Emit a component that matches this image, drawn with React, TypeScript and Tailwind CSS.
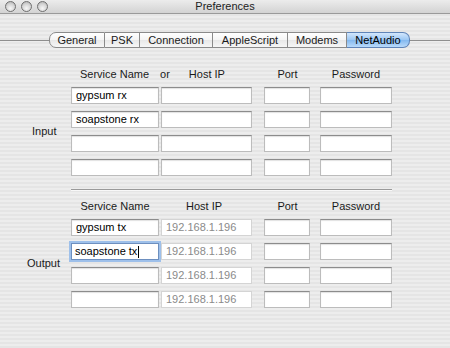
import React from "react";

const font = "font-['Liberation_Sans','DejaVu_Sans',sans-serif]";

const tabs = [
  { name: "General", w: "w-[56px]" },
  { name: "PSK", w: "w-[35px]" },
  { name: "Connection", w: "w-[73px]" },
  { name: "AppleScript", w: "w-[75px]" },
  { name: "Modems", w: "w-[59px]" },
  { name: "NetAudio", w: "w-[63px]" },
];

const inputRows = [
  { service: "gypsum rx" },
  { service: "soapstone rx" },
  { service: "" },
  { service: "" },
];

const outputRows = [
  { service: "gypsum tx", focused: false },
  { service: "soapstone tx", focused: true },
  { service: "", focused: false },
  { service: "", focused: false },
];

// plain text field with the aqua inset look
const Field = ({
  w,
  text,
  dim,
  focused,
}: {
  w: string;
  text?: string;
  dim?: boolean;
  focused?: boolean;
}) => {
  if (focused) {
    return (
      <div
        className={`${w} h-[17px] bg-white border border-[#6d8fbf] ring-[2px] ring-[#9ec0ea] flex items-center px-[3px] text-[11px] leading-none text-black`}
      >
        {text}
        <span className="w-px h-[12px] bg-black ml-px" />
      </div>
    );
  }
  return (
    <div
      className={`${w} h-[17px] bg-white border ${
        dim
          ? "border-[#d4d4d4] text-[#8a8a8a]"
          : "border-[#bcbcbc] border-t-[#8c8c8c] text-black shadow-[inset_0_1px_1px_rgba(0,0,0,0.12)]"
      } flex items-center px-[4px] text-[11px] leading-none`}
    >
      {text}
    </div>
  );
};

const TrafficLight = () => (
  <div className="w-[11px] h-[11px] rounded-full border border-[#707070] bg-[radial-gradient(circle_at_50%_70%,#f7f7f7_0%,#d4d4d4_55%,#a9a9a9_100%)]" />
);

export default function App() {
  return (
    <div
      className={`${font} w-[450px] h-[348px] overflow-hidden flex flex-col bg-[repeating-linear-gradient(to_bottom,#ededed_0px,#ededed_2px,#e5e5e5_2px,#e5e5e5_4px)] text-[#1a1a1a]`}
    >
      {/* title bar */}
      <div className="h-[14px] shrink-0 relative flex items-center bg-[linear-gradient(to_bottom,#ececec,#d3d3d3)] border-b border-[#9a9a9a]">
        <div className="flex gap-[5px] pl-[5px]">
          <TrafficLight />
          <TrafficLight />
          <TrafficLight />
        </div>
        <div className="absolute inset-0 flex justify-center items-center text-[11px] leading-none text-[#222]">
          Preferences
        </div>
      </div>

      {/* tab bar */}
      <div className="mt-[18px] h-[16px] flex items-center">
        <div className="w-[49px] h-px bg-[#8e8e8e]" />
        <div className="flex h-[16px]">
          {tabs.map((t, i) => {
            const selected = t.name === "NetAudio";
            const first = i === 0;
            const last = i === tabs.length - 1;
            return (
              <div
                key={t.name}
                className={`${t.w} h-[16px] flex items-center justify-center text-[11px] leading-none border-y ${
                  first ? "border-l rounded-l-[7px]" : ""
                } ${last ? "border-r rounded-r-[7px]" : "border-r"} ${
                  selected
                    ? "bg-[linear-gradient(to_bottom,#d3e7fd,#9ac6f3_50%,#83b8ef_51%,#b9dafb)] border-[#5f84b8] text-black"
                    : "bg-[linear-gradient(to_bottom,#ffffff,#f4f4f4_50%,#e8e8e8_51%,#f6f6f6)] border-[#8a8a8a]"
                }`}
              >
                {t.name}
              </div>
            );
          })}
        </div>
        <div className="flex-1 h-px bg-[#8e8e8e]" />
      </div>

      {/* input section */}
      <div className="mt-[19px] flex">
        <div className="w-[71px] flex items-center pl-[32px] pt-[20px] text-[11px]">Input</div>
        <div className="flex flex-col">
          <div className="flex h-[14px] items-center text-[11px]">
            <div className="w-[181px] flex">
              <span className="ml-[9px]">Service Name</span>
              <span className="ml-[11px]">or</span>
              <span className="ml-[19px]">Host IP</span>
            </div>
            <div className="ml-[12px] w-[46px] flex justify-center pl-[1px]">Port</div>
            <div className="ml-[10px] w-[72px] flex justify-center">Password</div>
          </div>
          <div className="mt-[6px] flex flex-col gap-[7px]">
            {inputRows.map((r, i) => (
              <div key={i} className="flex">
                <Field w="w-[88px]" text={r.service} />
                <div className="ml-[2px]">
                  <Field w="w-[91px]" />
                </div>
                <div className="ml-[12px]">
                  <Field w="w-[46px]" />
                </div>
                <div className="ml-[10px]">
                  <Field w="w-[72px]" />
                </div>
              </div>
            ))}
          </div>
        </div>
      </div>

      {/* separator */}
      <div className="mt-[13px] ml-[71px] w-[321px] h-px bg-[#9a9a9a] shadow-[0_1px_0_#f8f8f8]" />

      {/* output section */}
      <div className="mt-[9px] flex">
        <div className="w-[71px] flex items-center pl-[27px] pt-[20px] text-[11px]">Output</div>
        <div className="flex flex-col">
          <div className="flex h-[14px] items-center text-[11px]">
            <div className="w-[88px] flex justify-center">Service Name</div>
            <div className="ml-[2px] w-[91px] flex justify-center pr-[5px]">Host IP</div>
            <div className="ml-[12px] w-[46px] flex justify-center pl-[1px]">Port</div>
            <div className="ml-[10px] w-[72px] flex justify-center">Password</div>
          </div>
          <div className="mt-[6px] flex flex-col gap-[7px]">
            {outputRows.map((r, i) => (
              <div key={i} className="flex">
                <Field w="w-[88px]" text={r.service} focused={r.focused} />
                <div className="ml-[2px]">
                  <Field w="w-[91px]" text="192.168.1.196" dim />
                </div>
                <div className="ml-[12px]">
                  <Field w="w-[46px]" />
                </div>
                <div className="ml-[10px]">
                  <Field w="w-[72px]" />
                </div>
              </div>
            ))}
          </div>
        </div>
      </div>
    </div>
  );
}
